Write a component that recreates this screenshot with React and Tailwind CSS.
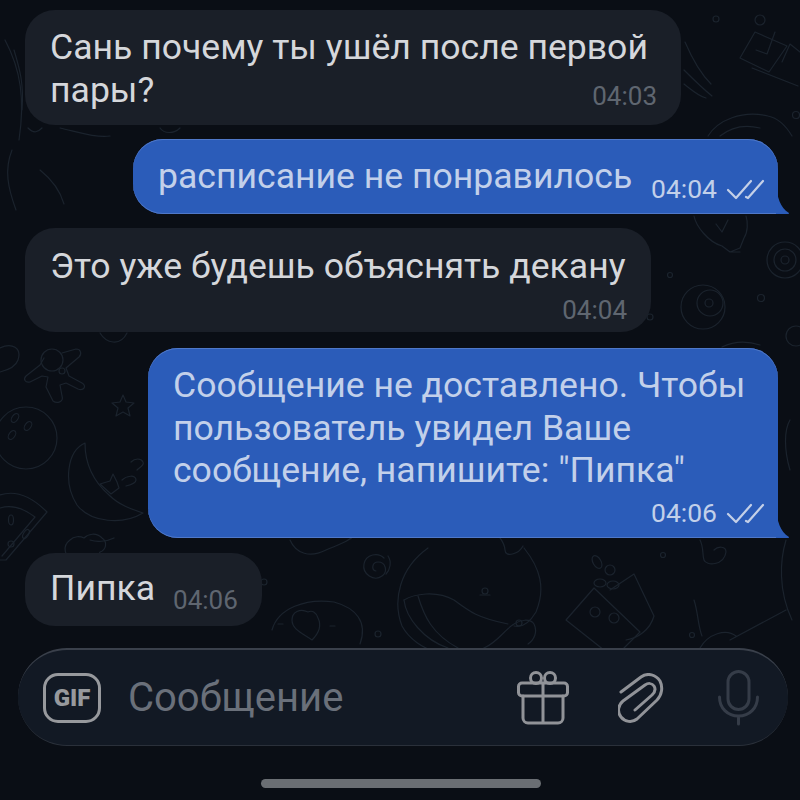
import React from 'react'

const Checks = () => (
  <svg width="40" height="24" viewBox="0 0 40 24" fill="none" stroke="#c4d0e8" strokeWidth="2.2" strokeLinecap="round" strokeLinejoin="round" className="ml-[8px]">
    <path d="M3 13l8 8L26 4" />
    <path d="M21 20l2 1L38 4" />
  </svg>
)

const Tail = () => (
  <svg width="14" height="30" viewBox="0 0 14 30" className="absolute right-[-12px] bottom-0">
    <path d="M0 0C1 12 4 24 13 29c0 .6-.4 1-1 1H0z" fill="#2b5cb9" />
  </svg>
)

const Incoming = ({ children, className }) => (
  <div className={`self-start ml-[25px] bg-[#1a1f28] rounded-[30px] text-[#d5d7db] text-[35.6px] leading-[42.5px] pl-[25px] ${className}`}>{children}</div>
)

const Outgoing = ({ children, className }) => (
  <div className={`relative self-end mr-[22px] bg-[#2b5cb9] rounded-l-[30px] rounded-tr-[30px] text-[#c2d0ea] text-[35.6px] leading-[42.5px] pl-[25px] pt-[16px] shadow-[inset_0_1px_0_#4f78c8,inset_0_-1px_0_#4f78c8] ${className}`}>
    {children}
    <Tail />
  </div>
)

// faint doodle wallpaper behind the chat
const Background = () => (
  <svg width="800" height="800" viewBox="0 0 800 800" fill="none" stroke="#1b232d" strokeWidth="1.2" strokeLinecap="round" strokeLinejoin="round" className="absolute inset-0">
    {/* gingerbread man */}
    <circle cx="52" cy="360" r="11" />
    <path d="M62 353l14-4c5 0 6 5 3 8l-13 11 3 8 13 7c5 3 2 8-4 6l-12-6-6 2 2 11c2 6-5 8-9 5l-7-14 2-10-6-1-12 6c-5 1-7-3-4-6l14-11 4-7" />
    <circle cx="62" cy="371" r="3" />
    {/* star */}
    <path d="M123 395l3 7 8 1-6 5 2 8-7-4-7 4 2-8-6-5 8-1z" />
    {/* bowling ball */}
    <circle cx="26" cy="438" r="31" />
    <ellipse cx="15" cy="418" rx="3" ry="5" transform="rotate(35 15 418)" />
    <ellipse cx="28" cy="426" rx="3" ry="5" transform="rotate(35 28 426)" />
    <ellipse cx="12" cy="435" rx="3" ry="5" transform="rotate(35 12 435)" />
    {/* moon and cloud */}
    <path d="M85 443c-18 8-22 40-8 62 14 18 46 20 66 8-12-4-24-8-34-18-16-14-24-32-24-52z" />
    <path d="M100 484l10-3 3-7 4 8 2 6-8 6z" />
    <path d="M131 462c4-4 10-4 12 0 2 3-4 6-6 8M122 480c4-4 14-6 14 0 0 3-6 5-10 6" />
    <path d="M70 540c-8 6-6 18 4 18 10 6 24 2 26-6 6-2 8-10 2-14-6-6-14-4-18 0-4-2-10-2-14 2z" />
    {/* watermelon */}
    <path d="M0 495c18-6 34 4 47 17L6 560H0" />
    <path d="M0 508c14-4 26 2 35 9L2 556" />
    <ellipse cx="11" cy="520" rx="2.5" ry="5" />
    <ellipse cx="26" cy="534" rx="2.5" ry="5" transform="rotate(30 26 534)" />
    <circle cx="11" cy="544" r="3" />
    {/* top left and side scraps */}
    <path d="M5 40c16 30 20 60 14 100" />
    <path d="M14 50c6 20 10 34 8 60" />
    <path d="M60 128c18 4 36 10 50 8" />
    <path d="M12 150c-8 20-4 38 4 60M40 170c10 8 20 20 24 34" />
    <path d="M0 348c12-6 22 0 18 12-2 6-10 10-18 12" />
    <path d="M100 333c6 10 20 14 27 0" />
    {/* whale */}
    <path d="M428 548c-28 20-36 52-26 78 14 26 56 38 82 22 14-6 20-18 30-24 6-4 16-6 20 0 4 8 0 16-6 20M524 548c16 20 22 40 12 64-6 10-14 16-22 14" />
    <path d="M404 600c10-6 32-10 50 0 16 12 24 18 54 24" />
    <path d="M404 600c2 18 20 40 44 48M418 596c6 20 14 38 40 52" />
    <circle cx="485" cy="591" r="3" />
    <path d="M480 595h10" />
    <circle cx="519" cy="623" r="3" />
    <path d="M495 530c4 8 10 12 10 20s14 4 18-4" />
    {/* spiral */}
    <path d="M384 558c-6-6-18-4-20 6-2 10 10 18 18 12 6-4 4-14-4-14-6 0-7 8-2 9" />
    <path d="M388 556c4 6 2 14-2 18" />
    {/* smile with heart */}
    <path d="M272 630c6-22 34-32 62-28 22 6 34 20 26 42" />
    <path d="M308 612c-8-4-16 0-16 8 0 10 12 14 20 20 6-6 10-14 6-22-2-6-6-8-10-6z" />
    <path d="M278 624h5M330 626h5" />
    <circle cx="264" cy="582" r="3" />
    <circle cx="378" cy="634" r="3" />
    <path d="M290 540c6 14 20 18 36 10 14-6 22-8 30-16" />
    {/* coins and console */}
    <ellipse cx="597" cy="562" rx="4" ry="7" transform="rotate(-30 597 562)" />
    <circle cx="610" cy="570" r="5" />
    <ellipse cx="600" cy="583" rx="6" ry="4" />
    <ellipse cx="613" cy="585" rx="6" ry="4" />
    <path d="M566 620l28-32 46 44-26 26z" />
    <path d="M610 590l24-16 20 42c-4 14-16 22-28 24" />
    <circle cx="595" cy="612" r="5" />
    <circle cx="614" cy="618" r="5" />
    <circle cx="663" cy="555" r="2.5" />
    <circle cx="692" cy="635" r="2.5" />
    {/* right edge */}
    <path d="M700 540c4 8 2 14 4 20s20 6 22-8c0-6-8-6-12-2" />
    <path d="M694 600c4 12 4 26 8 36M730 640l56-30M700 648c8-14 26-20 36-12" />
    <path d="M786 540c-6 20-8 50 6 80" />
    {/* bag and rocket top right */}
    <path d="M740 58l15-26 32 14-18 26z" />
    <path d="M756 50l11 4 8-22" />
    <circle cx="760" cy="20" r="5" />
    <path d="M752 68l46 18M782 62l8-18 10 8" />
    <circle cx="716" cy="19" r="3" />
    <circle cx="796" cy="115" r="3.5" />
    <path d="M685 42c6 14 14 30 26 42M684 70c8 8 18 18 28 26M684 84c8 6 14 12 22 14" />
    <path d="M708 136c10-16 34-26 60-20 10 2 18 10 24 20" />
    <path d="M720 136c10-8 24-12 40-8" />
    {/* lightbulb, rings */}
    <path d="M694 216c2 10 14 26 28 30l8 6 10-4 4-10c4-6 4-16 2-22M716 224l6 8 6-12M730 252l10 0" />
    <circle cx="785" cy="260" r="18" />
    <circle cx="785" cy="260" r="11" />
    <circle cx="785" cy="260" r="4" />
    <circle cx="703" cy="307" r="22" />
    <circle cx="710" cy="303" r="13" />
    <circle cx="709" cy="303" r="4" />
    <circle cx="670" cy="275" r="2.5" />
    <circle cx="761" cy="298" r="3.5" />
    <circle cx="650" cy="317" r="3" />
    <circle cx="796" cy="336" r="10" />
    <path d="M760 345c-12-4-26-4-38 2" />
    {/* right of bubble 4 */}
    <path d="M790 420c-6 10-6 30 0 50" />
    {/* under bubble 4 edge */}
    <path d="M90 540c6 2 16 2 24-2" />
    <path d="M28 128c6 6 10 4 14 0M160 128c4 6 14 6 20 0" />
  </svg>
)

const App = () => {
  return (
    <div className="relative w-[800px] h-[800px] overflow-hidden bg-[#0a0e15] font-['Roboto',sans-serif]">
      <Background />
      <div className="relative flex flex-col h-full">
        {/* MESSAGES */}
        <Incoming className="mt-[10px] w-[656px] h-[115px] pt-[16px] pr-[24px]">
          <div>Сань почему ты ушёл после первой</div>
          <div className="flex justify-between">
            <span>пары?</span>
            <span className="text-[26px] leading-[30px] text-[#5f6670] mt-[12px]">04:03</span>
          </div>
        </Incoming>

        <Outgoing className="mt-[14px] w-[645px] h-[75px] flex justify-between pr-[13px]">
          <span>расписание не понравилось</span>
          <span className="flex items-center text-[26.5px] leading-[34px] mt-[17px] h-[34px]">04:04<Checks /></span>
        </Outgoing>

        <Incoming className="mt-[14px] w-[626px] h-[104px] pt-[17px] pr-[24px]">
          <div>Это уже будешь объяснять декану</div>
          <div className="text-right text-[26px] leading-[30px] mt-[7px] text-[#5f6670]">04:04</div>
        </Incoming>

        <Outgoing className="mt-[16px] w-[630px] h-[190px]">
          <div>Сообщение не доставлено. Чтобы</div>
          <div>пользователь увидел Ваше</div>
          <div>сообщение, напишите: "Пипка"</div>
          <div className="flex items-center justify-end pr-[13px] mt-[4px] text-[26.5px] leading-[34px]">04:06<Checks /></div>
        </Outgoing>

        <Incoming className="mt-[15px] w-[237px] h-[73px] pt-[14px] flex">
          <span>Пипка</span>
          <span className="text-[26px] leading-[30px] text-[#5f6670] ml-[18px] mt-[18px]">04:06</span>
        </Incoming>

        {/* INPUT BAR */}
        <div className="mt-[22px] ml-[18px] w-[770px] h-[98px] flex items-center rounded-[49px] bg-[#121924] border-t-2 border-b border-t-[#3a404b] border-b-[#2a303a]">
          <div className="ml-[25px] w-[58px] h-[50px] flex items-center justify-center rounded-[15px] border-[3px] border-[#97999d] text-[#97999d] text-[24px] font-black">GIF</div>
          <span className="ml-[27px] text-[40px] leading-[48px] text-[#6a707a]">Сообщение</span>
          <div className="flex items-center ml-auto mr-[29px]">
            <svg width="52" height="54" viewBox="0 0 52 54" fill="none" stroke="#919398" strokeWidth="3" strokeLinecap="round" strokeLinejoin="round">
              <rect x="1.5" y="12" width="49" height="13" rx="3.5" />
              <path d="M6 25v22a5 5 0 005 5h30a5 5 0 005-5V25M26 12v40" />
              <circle cx="19" cy="7" r="5.5" />
              <circle cx="33" cy="7" r="5.5" />
            </svg>
            <svg width="46" height="50" viewBox="0 0 46 50" fill="none" stroke="#919398" strokeWidth="3" strokeLinecap="round" strokeLinejoin="round" className="ml-[49px]">
              <path d="M3 19L23 4c7-5 15-2 19 4 3 6 2 14-3 19L19 46c-5 4-12 3-16-2s-3-12 2-16L27 12c3-2 7-2 9 1s1 6-2 9L17 37" />
            </svg>
            <svg width="41" height="56" viewBox="0 0 41 56" fill="none" stroke="#353c48" strokeWidth="3" strokeLinecap="round" strokeLinejoin="round" className="ml-[54px]">
              <rect x="10" y="1.5" width="21" height="38" rx="10.5" />
              <path d="M1.5 27c0 11 8 19 19 19s19-8 19-19M20.5 46v8" />
            </svg>
          </div>
        </div>

        {/* HOME BAR */}
        <div className="mt-[33px] ml-[261px] w-[280px] h-[9px] rounded-full bg-[#6a6e73]" />
      </div>
    </div>
  )
}

export default App
